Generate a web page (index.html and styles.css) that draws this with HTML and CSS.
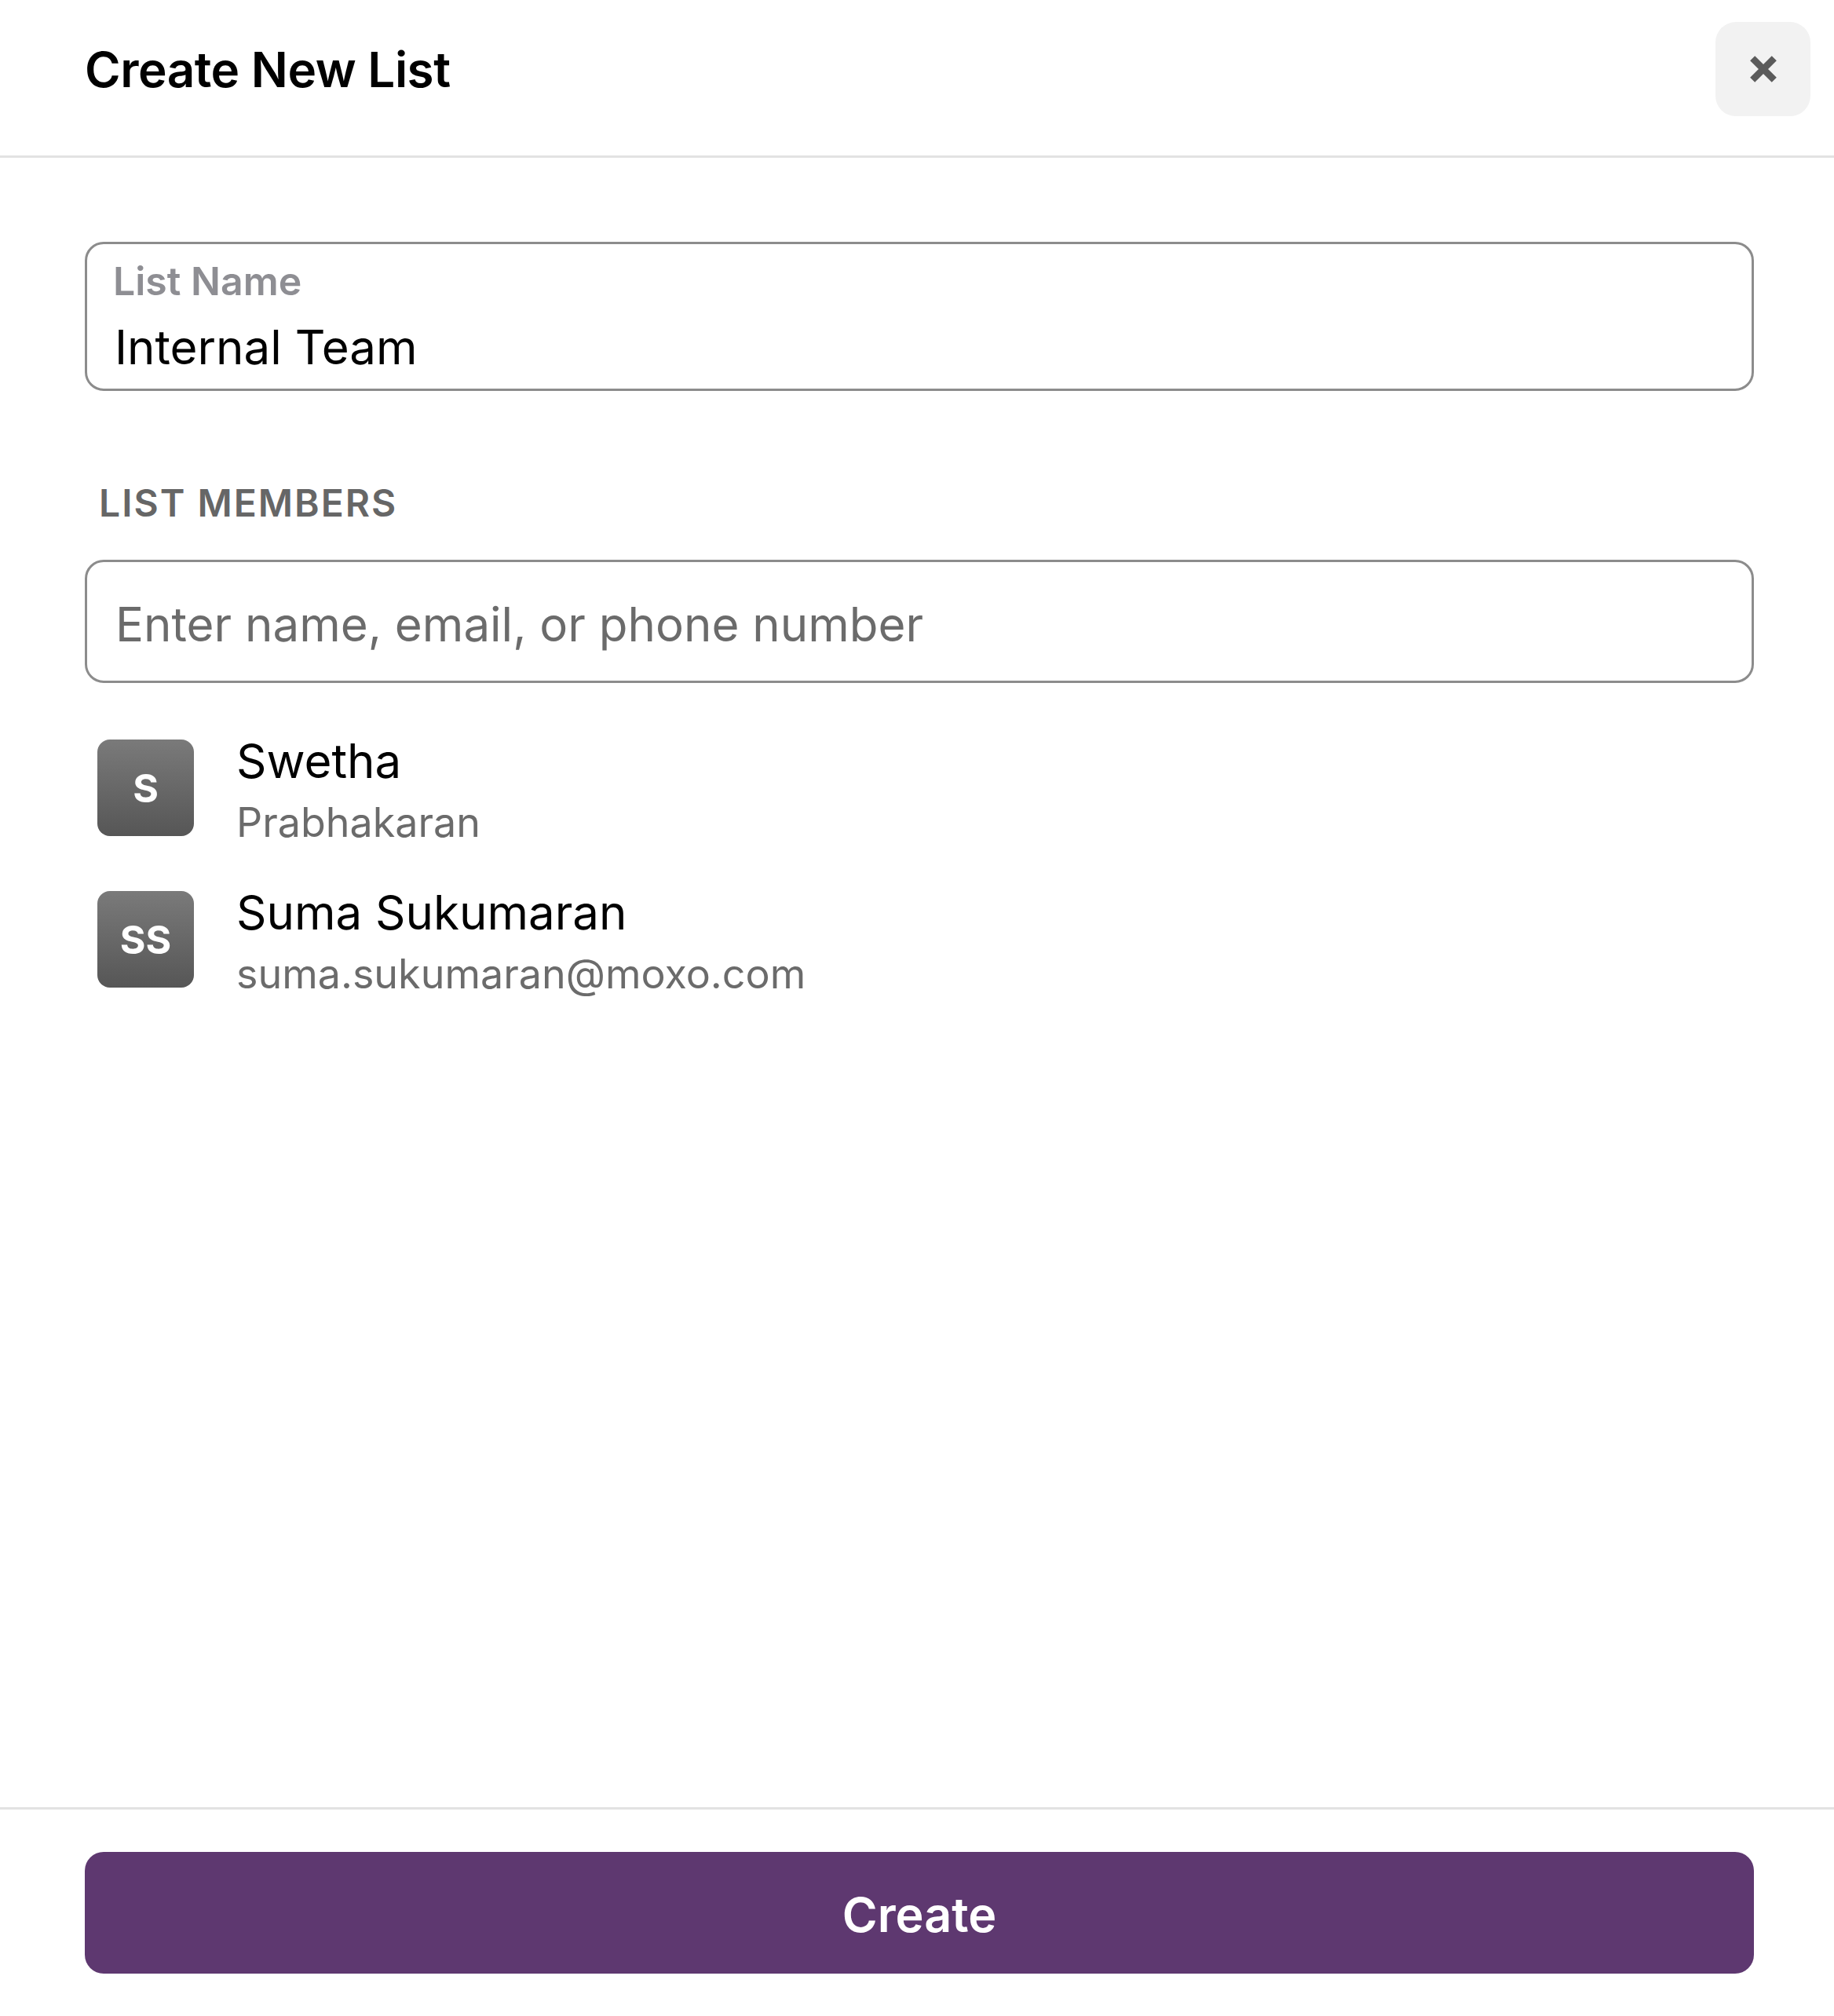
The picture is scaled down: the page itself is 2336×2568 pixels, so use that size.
FILE: index.html
```html
<!DOCTYPE html>
<html lang="en">
<head>
<meta charset="utf-8">
<title>Create New List</title>
<link rel="stylesheet" href="styles.css">
</head>
<body>
<div class="sheet">
  <header class="header">
    <h1 class="title">Create New List</h1>
    <button class="close" aria-label="Close">
      <svg viewBox="0 0 40 40" width="40" height="40"><path d="M8 8 L32 32 M32 8 L8 32" stroke="#5b5b5b" stroke-width="7.5" stroke-linecap="butt"/></svg>
    </button>
  </header>
  <main class="content">
    <div class="field">
      <div class="field-label">List Name</div>
      <div class="field-value">Internal Team</div>
    </div>
    <div class="section-label">LIST MEMBERS</div>
    <div class="search">Enter name, email, or phone number</div>
    <ul class="members">
      <li class="member">
        <div class="avatar">S</div>
        <div class="info">
          <div class="name">Swetha</div>
          <div class="sub">Prabhakaran</div>
        </div>
      </li>
      <li class="member">
        <div class="avatar">SS</div>
        <div class="info">
          <div class="name">Suma Sukumaran</div>
          <div class="sub">suma.sukumaran@moxo.com</div>
        </div>
      </li>
    </ul>
  </main>
  <footer class="footer">
    <button class="create">Create</button>
  </footer>
</div>
</body>
</html>
```

FILE: styles.css
```css
* { box-sizing: border-box; }
html, body { margin: 0; padding: 0; background: #fff; }
body { font-family: Inter, "Noto Sans", "Liberation Sans", sans-serif; color: #000; }

.sheet {
  display: flex;
  flex-direction: column;
  height: 2568px;
}

.header {
  height: 201px;
  padding: 28px 30px 50px 108px;
  display: flex;
  align-items: center;
  justify-content: space-between;
  border-bottom: 3px solid #e2e2e2;
}
.title {
  margin: 0;
  font-size: 62px;
  font-weight: 600;
  letter-spacing: -0.5px;
}
.close {
  width: 121px;
  height: 120px;
  border: none;
  border-radius: 26px;
  background: #f2f2f2;
  display: flex;
  align-items: center;
  justify-content: center;
  padding: 0;
}
.close svg { width: 46px; height: 46px; }

.content {
  flex: 1;
  padding: 107px 102px 0 108px;
}

.field {
  height: 190px;
  border: 3px solid #8c8c8c;
  border-radius: 24px;
  padding: 19px 36px 0 33px;
}
.field-label {
  font-size: 50px;
  font-weight: 600;
  color: #8e8e93;
  line-height: 56px;
}
.field-value {
  font-size: 60px;
  line-height: 80px;
  margin-top: 16px;
  margin-left: 2px;
}

.section-label {
  margin: 115px 0 0 18px;
  font-size: 48px;
  font-weight: 600;
  color: #666;
  letter-spacing: 2px;
  line-height: 56px;
}

.search {
  margin-top: 44px;
  height: 157px;
  border: 3px solid #8c8c8c;
  border-radius: 24px;
  padding: 6px 36px 0;
  display: flex;
  align-items: center;
  font-size: 60px;
  color: #6b6b6b;
}

.members {
  list-style: none;
  margin: 72px 0 0 0;
  padding: 0 0 0 16px;
}
.member {
  display: flex;
  align-items: center;
  height: 123px;
  margin-bottom: 70px;
}
.avatar {
  width: 123px;
  height: 123px;
  border-radius: 16px;
  background: linear-gradient(#7a7a7a, #565656);
  color: #fff;
  font-weight: 700;
  font-size: 50px;
  display: flex;
  align-items: center;
  justify-content: center;
  flex: none;
}
.info { margin-left: 54px; margin-top: 6px; }
.name { font-size: 60px; line-height: 72px; }
.sub { font-size: 52px; line-height: 64px; color: #6b6b6b; margin-top: 11px; }

.footer {
  border-top: 3px solid #e2e2e2;
  padding: 54px 102px 54px 108px;
}
.create {
  width: 100%;
  height: 155px;
  border: none;
  border-radius: 24px;
  background: #5e3870;
  color: #fff;
  font-family: inherit;
  font-size: 61px;
  font-weight: 600;
  padding-top: 6px;
}
```
